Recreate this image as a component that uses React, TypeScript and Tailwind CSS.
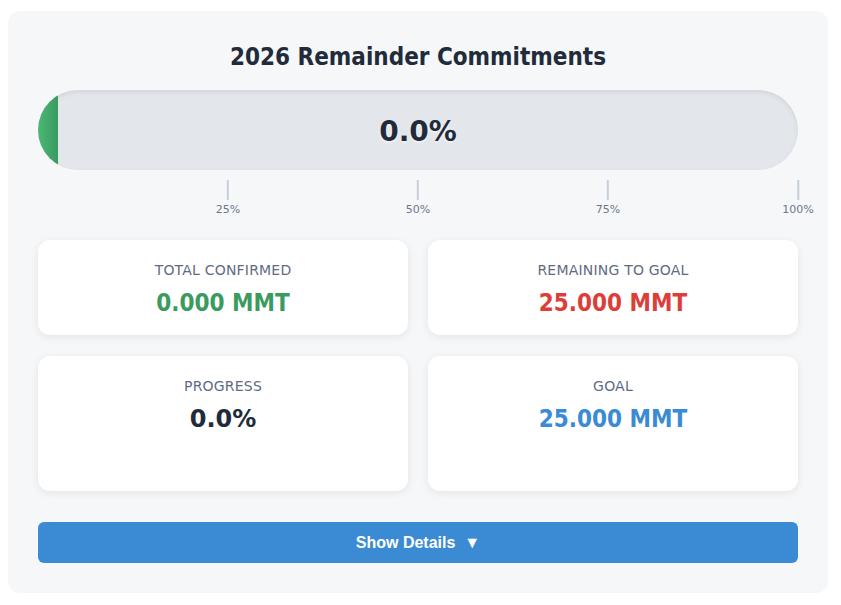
import React from 'react';

interface StatCardProps {
  label: string;
  value: string;
  valueClass: string;
  heightClass: string;
  condensed?: boolean;
}

const boldFont = { fontFamily: '"DejaVu Sans Condensed", "DejaVu Sans", Verdana, sans-serif' };

const StatCard: React.FC<StatCardProps> = ({ label, value, valueClass, heightClass, condensed = true }) => (
  <div
    className={`flex flex-col items-center rounded-xl bg-white pt-[20px] shadow-[0_2px_8px_rgba(0,0,0,0.08)] ${heightClass}`}
  >
    <div className="text-[14px] leading-[20px] tracking-[0.2px] text-[#5f6b82] uppercase">{label}</div>
    <div
      className={`mt-[8px] text-[24px] leading-[30px] font-bold ${valueClass}`}
      style={condensed ? boldFont : undefined}
    >
      {value}
    </div>
  </div>
);

const ticks = [
  { pct: 25, label: '25%' },
  { pct: 50, label: '50%' },
  { pct: 75, label: '75%' },
  { pct: 100, label: '100%' },
];

const App: React.FC = () => {
  const progress = 0;

  return (
    <div className="min-h-screen bg-white pt-[11px] pl-[8px]" style={{ fontFamily: '"DejaVu Sans", Verdana, sans-serif' }}>
      <div className="w-[820px] h-[582px] rounded-xl bg-[#f6f7f9] px-[30px] pt-[30px]">
        <h2 className="text-center text-[24px] leading-[32px] font-bold text-[#222b3a]" style={boldFont}>
          2026 Remainder Commitments
        </h2>

        <div className="relative mt-[17px] h-[80px] overflow-hidden rounded-full bg-[#e3e6ea] shadow-[inset_0_2px_5px_rgba(0,0,0,0.08)]">
          <div
            className="absolute inset-y-0 left-0 min-w-[20px] bg-gradient-to-r from-[#4cb877] to-[#389a5f]"
            style={{ width: `${progress}%` }}
          />
          <div className="relative flex h-full items-center justify-center pt-[3px] text-[28px] font-bold text-[#222b3a] [text-shadow:0_1px_3px_rgba(255,255,255,0.9)]">
            {progress.toFixed(1)}%
          </div>
        </div>

        <div className="relative mt-[10px] h-[40px]">
          {ticks.map((t) => (
            <div
              key={t.pct}
              className="absolute top-0 flex -translate-x-1/2 flex-col items-center"
              style={{ left: `${t.pct}%` }}
            >
              <div className="h-[20px] w-[2px] bg-[#c5cedb]" />
              <div className="mt-[3px] text-[11px] leading-[14px] text-[#6b778c]">{t.label}</div>
            </div>
          ))}
        </div>

        <div className="mt-[20px] grid grid-cols-2 gap-x-[20px] gap-y-[21px]">
          <StatCard label="Total Confirmed" value="0.000 MMT" valueClass="text-[#3b9a5e]" heightClass="h-[95px]" />
          <StatCard label="Remaining to Goal" value="25.000 MMT" valueClass="text-[#dc3e3a]" heightClass="h-[95px]" />
          <StatCard label="Progress" value="0.0%" valueClass="text-[#222b3a]" heightClass="h-[135px]" condensed={false} />
          <StatCard label="Goal" value="25.000 MMT" valueClass="text-[#3a8bd4]" heightClass="h-[135px]" />
        </div>

        <button
          className="mt-[31px] flex h-[41px] w-full items-center justify-center rounded-md bg-[#3a8bd4] text-[16px] font-bold text-white"
          style={{ fontFamily: '"Liberation Sans", Arial, sans-serif' }}
        >
          Show Details <span className="ml-[9px] text-[16px] leading-none">▼</span>
        </button>
      </div>
    </div>
  );
};

export default App;
